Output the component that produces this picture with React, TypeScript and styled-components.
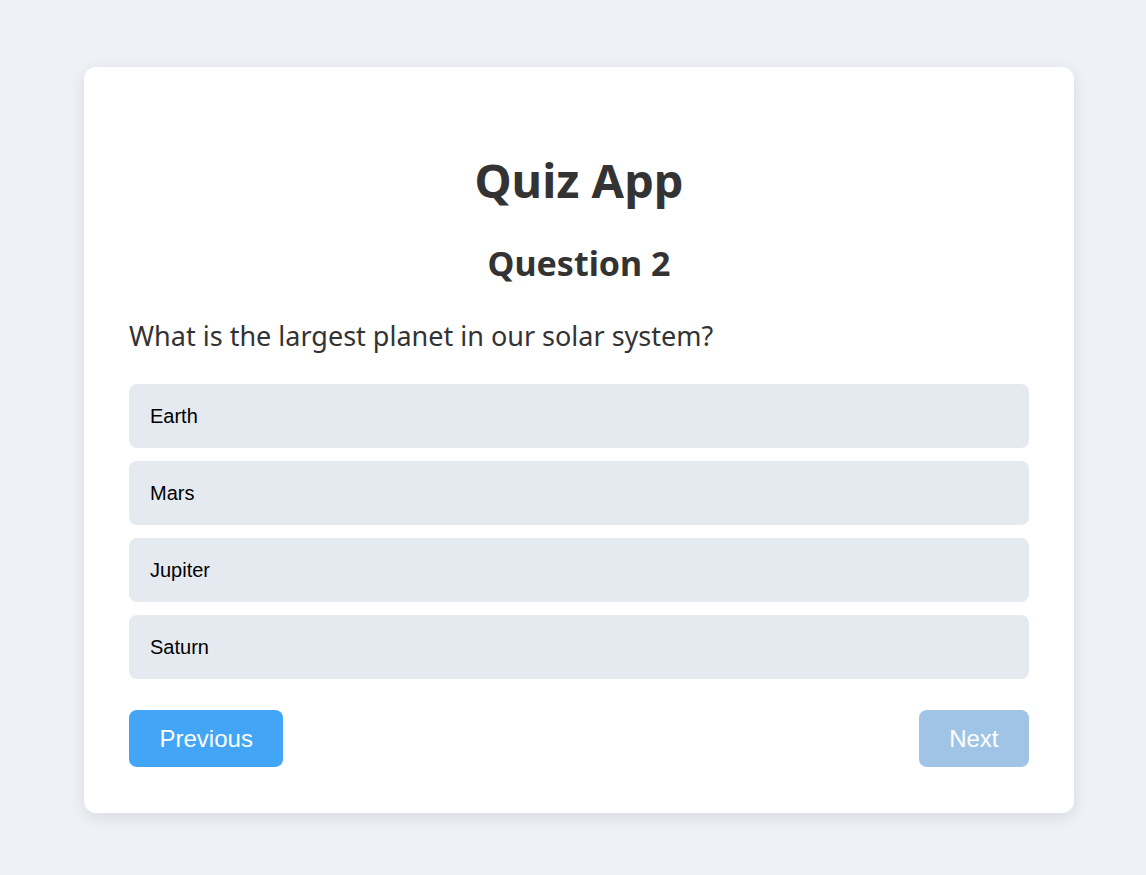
import React, { useState } from "react";
import styled, { createGlobalStyle } from "styled-components";

const GlobalStyle = createGlobalStyle`
  html, body {
    margin: 0;
    padding: 0;
    background: #eef2f7;
  }
  body {
    font-family: "Noto Sans", "Open Sans", sans-serif;
    color: #333333;
  }
`;

const Page = styled.div`
  min-height: 875px;
  box-sizing: border-box;
  padding: 67px 72px 0 84px;
`;

const Card = styled.div`
  background: #ffffff;
  border-radius: 12px;
  box-shadow: 0 4px 16px rgba(0, 0, 0, 0.1);
  padding: 45px 45px 46px;
  box-sizing: border-box;
  width: 990px;
`;

const Title = styled.h1`
  margin: 38px 0 0;
  text-align: center;
  font-size: 47px;
  line-height: 60px;
  font-weight: 700;
  color: #333333;
`;

const QuestionNumber = styled.h2`
  margin: 31px 0 0;
  text-align: center;
  font-size: 34px;
  line-height: 44px;
  font-weight: 700;
  color: #333333;
`;

const QuestionText = styled.p`
  margin: 33px 0 0;
  font-size: 27px;
  line-height: 36px;
  color: #333333;
`;

const Options = styled.div`
  display: flex;
  flex-direction: column;
  gap: 13px;
  margin-top: 30px;
`;

const Option = styled.button`
  display: block;
  width: 100%;
  text-align: left;
  border: none;
  border-radius: 8px;
  background: #e5eaf0;
  padding: 20px 21px;
  font-family: "Liberation Sans", Arial, sans-serif;
  font-size: 20px;
  line-height: 24px;
  color: #000000;
  cursor: pointer;
`;

const Nav = styled.div`
  display: flex;
  justify-content: space-between;
  margin-top: 31px;
`;

const NavButton = styled.button<{ $disabled?: boolean }>`
  border: none;
  border-radius: 8px;
  background: ${(p) => (p.$disabled ? "#9fc4e6" : "#42a5f5")};
  color: #ffffff;
  font-family: "Liberation Sans", Arial, sans-serif;
  font-size: 24px;
  line-height: 27px;
  padding: 15px 30.5px;
  cursor: ${(p) => (p.$disabled ? "default" : "pointer")};
`;

const options = ["Earth", "Mars", "Jupiter", "Saturn"];

export default function App() {
  const [selected, setSelected] = useState<string | null>(null);
  return (
    <>
      <GlobalStyle />
      <Page>
        <Card>
          <Title>Quiz App</Title>
          <QuestionNumber>Question 2</QuestionNumber>
          <QuestionText>What is the largest planet in our solar system?</QuestionText>
          <Options>
            {options.map((o) => (
              <Option key={o} onClick={() => setSelected(o)}>
                {o}
              </Option>
            ))}
          </Options>
          <Nav>
            <NavButton>Previous</NavButton>
            <NavButton $disabled={!selected}>Next</NavButton>
          </Nav>
        </Card>
      </Page>
    </>
  );
}
